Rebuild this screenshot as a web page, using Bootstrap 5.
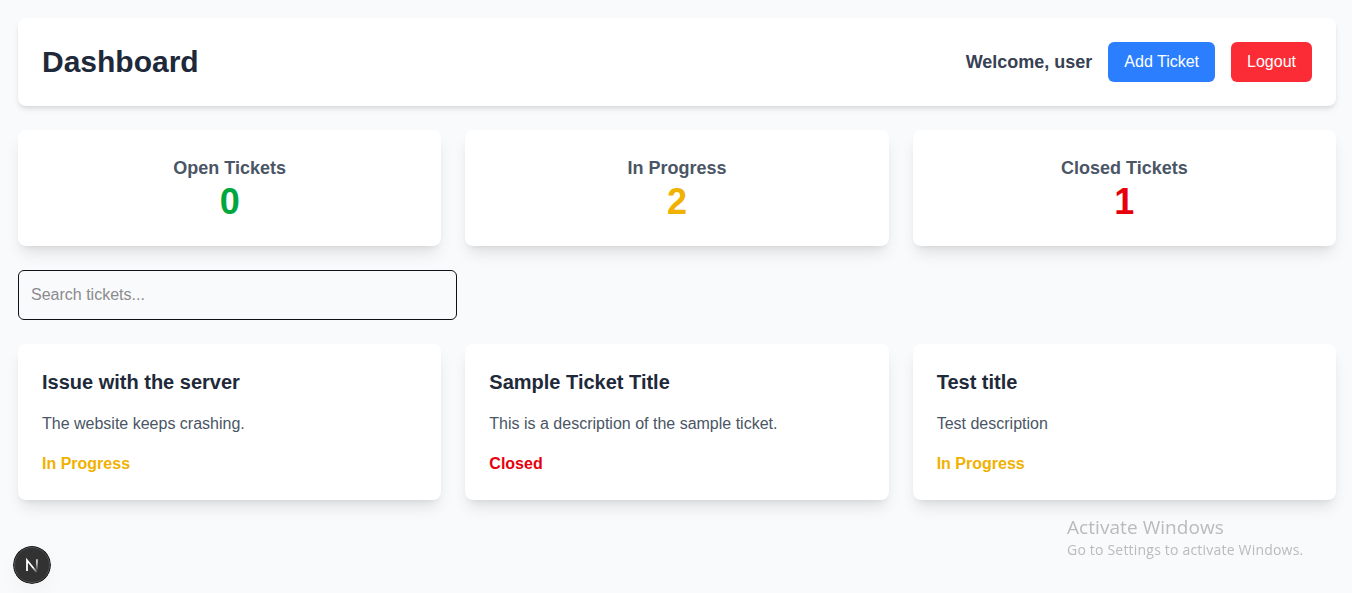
<!DOCTYPE html>
<html lang="en">
<head>
<meta charset="utf-8">
<meta name="viewport" content="width=device-width, initial-scale=1">
<title>Dashboard</title>
<link href="https://cdn.jsdelivr.net/npm/bootstrap@5.3.0/dist/css/bootstrap.min.css" rel="stylesheet">
<style>
  body { background: #f9fafb; font-family: "Liberation Sans", Arial, sans-serif; color: #1e2939; padding: 18px 16px 0 18px; height: 593px; overflow: hidden; }
  .panel { background: #fff; border-radius: 8px; }
  .topbar { height: 88px; padding: 0 24px; box-shadow: 0 4px 6px -1px rgba(0,0,0,.1), 0 2px 4px -2px rgba(0,0,0,.1); }
  .tile { box-shadow: 0 10px 15px -3px rgba(0,0,0,.1), 0 4px 6px -4px rgba(0,0,0,.1); padding: 24px; }
  .topbar h1 { font-size: 30px; line-height: 36px; font-weight: 700; }
  .welcome { font-size: 18px; line-height: 28px; font-weight: 600; color: #364153; }
  .btn { --bs-btn-padding-x: 16px; --bs-btn-padding-y: 8px; --bs-btn-border-width: 0; --bs-btn-border-radius: 6px; --bs-btn-color: #fff; }
  .btn-add { --bs-btn-bg: #2b7fff; }
  .btn-out { --bs-btn-bg: #fb2c36; }
  .tile-grid { --bs-gutter-x: 24px; }
  .stat { height: 116px; }
  .stat h2 { font-size: 18px; line-height: 28px; font-weight: 600; color: #4a5565; }
  .stat p { font-size: 36px; line-height: 40px; font-weight: 700; }
  .c-open { color: #00a63e; }
  .c-progress { color: #f0b100; }
  .c-closed { color: #e7000b; }
  .search { width: 439px; height: 50px; border: 1px solid #101114; border-radius: 6px; background: transparent; padding: 12px; }
  .search::placeholder { color: #8a8b8d; }
  .ticket { height: 156px; }
  .ticket h2 { font-size: 20px; line-height: 28px; font-weight: 600; margin-bottom: 16px; }
  .ticket p { color: #4a5565; margin-bottom: 16px; }
  .ticket strong { display: block; }
  .dev-tool { position: fixed; left: 13px; bottom: 9px; width: 38px; height: 38px; border-radius: 50%; box-shadow: 0 8px 24px -4px rgba(0,0,0,.06); }
  .watermark { position: fixed; left: 1067px; top: 515px; font-family: "Open Sans", sans-serif; color: #b9bbbc; white-space: nowrap; }
  .watermark div:first-child { font-size: 19px; line-height: 24px; letter-spacing: .06px; }
  .watermark div:last-child { font-size: 14px; line-height: 21px; letter-spacing: .2px; }
</style>
</head>
<body>
  <header class="panel topbar d-flex align-items-center justify-content-between mb-4">
    <h1 class="m-0">Dashboard</h1>
    <div class="d-flex align-items-center gap-3">
      <span class="welcome">Welcome, user</span>
      <button class="btn btn-add">Add Ticket</button>
      <button class="btn btn-out">Logout</button>
    </div>
  </header>
  <section class="row tile-grid mb-4 text-center">
    <div class="col-4"><div class="panel tile stat"><h2 class="m-0">Open Tickets</h2><p class="m-0 c-open">0</p></div></div>
    <div class="col-4"><div class="panel tile stat"><h2 class="m-0">In Progress</h2><p class="m-0 c-progress">2</p></div></div>
    <div class="col-4"><div class="panel tile stat"><h2 class="m-0">Closed Tickets</h2><p class="m-0 c-closed">1</p></div></div>
  </section>
  <input class="search form-control mb-4" type="text" placeholder="Search tickets...">
  <section class="row tile-grid">
    <div class="col-4"><div class="panel tile ticket"><h2>Issue with the server</h2><p>The website keeps crashing.</p><strong class="c-progress">In Progress</strong></div></div>
    <div class="col-4"><div class="panel tile ticket"><h2>Sample Ticket Title</h2><p>This is a description of the sample ticket.</p><strong class="c-closed">Closed</strong></div></div>
    <div class="col-4"><div class="panel tile ticket"><h2>Test title</h2><p>Test description</p><strong class="c-progress">In Progress</strong></div></div>
  </section>
  <svg class="dev-tool" viewBox="0 0 38 38" aria-label="Developer tools">
    <defs>
      <linearGradient id="diag" gradientUnits="userSpaceOnUse" x1="13" y1="13" x2="25" y2="26"><stop offset=".6" stop-color="#fff"/><stop offset="1" stop-color="#fff" stop-opacity=".1"/></linearGradient>
      <linearGradient id="stem" gradientUnits="userSpaceOnUse" x1="0" y1="13" x2="0" y2="24"><stop offset=".3" stop-color="#fff" stop-opacity=".85"/><stop offset="1" stop-color="#fff" stop-opacity=".1"/></linearGradient>
    </defs>
    <circle cx="19" cy="19" r="19" fill="#111"/>
    <circle cx="19" cy="19" r="17.5" fill="#323232" stroke="#565656" stroke-width="1"/>
    <path d="M14 25V14.2L23.6 26" fill="none" stroke="url(#diag)" stroke-width="1.8"/>
    <path d="M23.1 13.2H24.7V24H23.1Z" fill="url(#stem)"/>
  </svg>
  <div class="watermark"><div>Activate Windows</div><div>Go to Settings to activate Windows.</div></div>
<script src="https://cdn.jsdelivr.net/npm/bootstrap@5.3.0/dist/js/bootstrap.bundle.min.js"></script>
</body>
</html>
